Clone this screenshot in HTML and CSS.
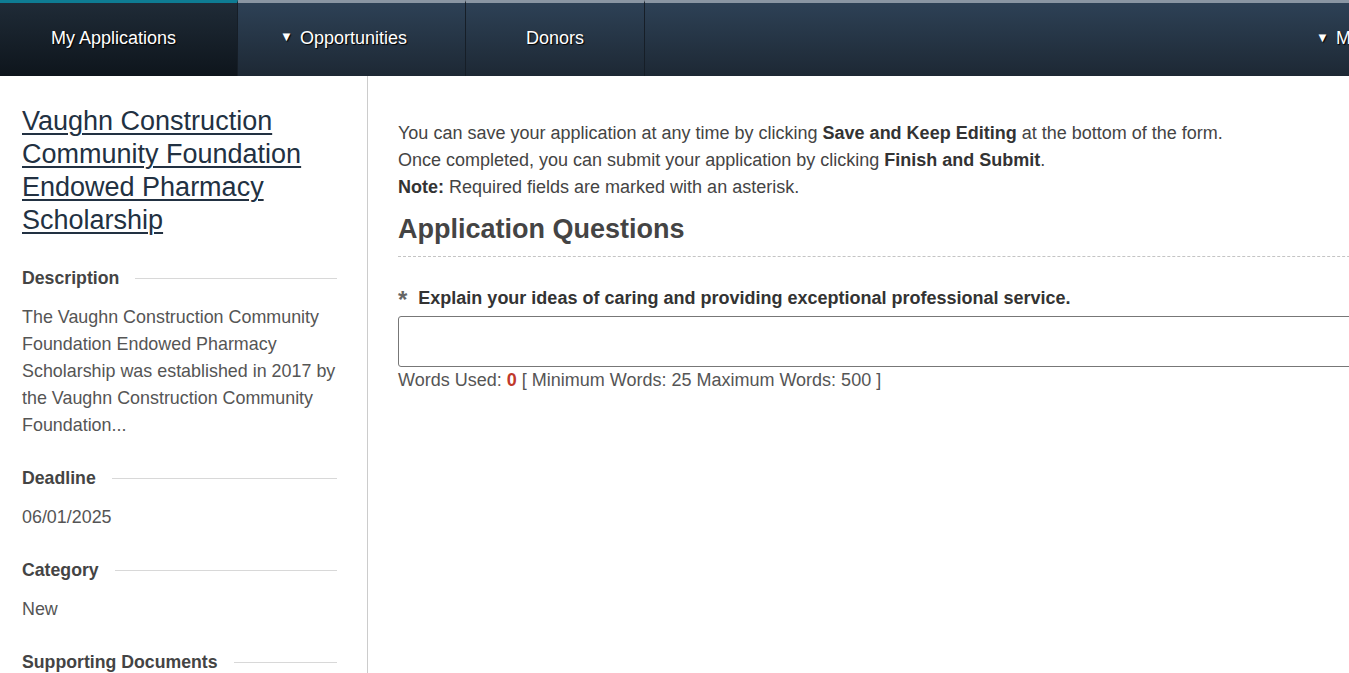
FILE: index.html
```html
<!DOCTYPE html>
<html>
<head>
<meta charset="utf-8">
<link rel="stylesheet" href="styles.css">
</head>
<body>
<div class="page">
  <nav class="topnav">
    <a class="tab active">My Applications</a>
    <a class="tab tab-opp"><span class="caret">&#9660;</span>Opportunities</a>
    <a class="tab tab-donors">Donors</a>
    <div class="tab-fill"><a class="tab-menu"><span class="caret">&#9660;</span>My Account</a></div>
  </nav>
  <div class="layout">
    <aside class="sidebar">
      <a class="title">Vaughn Construction Community Foundation Endowed Pharmacy Scholarship</a>
      <div class="section">
        <h3 class="sec-head"><span>Description</span></h3>
        <p class="sec-body">The Vaughn Construction Community Foundation Endowed Pharmacy Scholarship was established in 2017 by the Vaughn Construction Community Foundation...</p>
      </div>
      <div class="section">
        <h3 class="sec-head"><span>Deadline</span></h3>
        <p class="sec-body">06/01/2025</p>
      </div>
      <div class="section">
        <h3 class="sec-head"><span>Category</span></h3>
        <p class="sec-body">New</p>
      </div>
      <div class="section">
        <h3 class="sec-head"><span>Supporting Documents</span></h3>
      </div>
    </aside>
    <main class="main">
      <div class="intro">
        <p>You can save your application at any time by clicking <b>Save and Keep Editing</b> at the bottom of the form.</p>
        <p>Once completed, you can submit your application by clicking <b>Finish and Submit</b>.</p>
        <p><b>Note:</b> Required fields are marked with an asterisk.</p>
      </div>
      <h2 class="questions-head">Application Questions</h2>
      <div class="question">
        <label class="q-label"><span class="req">*</span>Explain your ideas of caring and providing exceptional professional service.</label>
        <textarea class="q-input"></textarea>
        <div class="words">Words Used: <span class="count">0</span> [ Minimum Words: 25 Maximum Words: 500 ]</div>
      </div>
    </main>
  </div>
</div>
</body>
</html>
```
FILE: styles.css
```css
html, body {
  margin: 0;
  padding: 0;
  overflow: hidden;
  background: #fff;
}
body {
  font-family: "Liberation Sans", Arial, sans-serif;
  color: #444;
}
.page {
  width: 1500px;
}
.topnav {
  display: flex;
  height: 76px;
  background: linear-gradient(#2e4257, #1d2834);
}
.tab {
  display: flex;
  align-items: center;
  justify-content: center;
  box-sizing: border-box;
  height: 76px;
  padding-bottom: 2px;
  color: #fff;
  font-size: 18px;
  text-shadow: 1px 1px 1px #000;
  border-top: 3px solid #8a96a3;
  border-right: 1px solid #161e27;
}
.tab.active {
  width: 238px;
  padding-right: 10px;
  background: linear-gradient(#1f2b37, #0e151c);
  border-top-color: #0e7c93;
}
.tab-opp { width: 228px; padding-right: 16px; }
.tab-donors { width: 179px; }
.tab-fill {
  flex: 1;
  display: flex;
  justify-content: flex-end;
  align-items: center;
  border-top: 3px solid #8a96a3;
  box-sizing: border-box;
  height: 76px;
  padding-bottom: 2px;
}
.tab-menu {
  color: #fff;
  font-size: 18px;
  text-shadow: 1px 1px 1px #000;
  width: 184px;
}
.caret {
  font-size: 13px;
  margin-right: 7px;
  position: relative;
  top: -2px;
}
.layout {
  display: flex;
  height: 597px;
}
.sidebar {
  width: 368px;
  box-sizing: border-box;
  border-right: 1px solid #ccc;
  padding: 29px 30px 0 22px;
  flex-shrink: 0;
}
.title {
  display: block;
  font-size: 27px;
  line-height: 33px;
  color: #223142;
  text-decoration: underline;
  text-decoration-thickness: 2px;
  text-underline-offset: 3px;
  margin-bottom: 28px;
}
.section {
  margin-bottom: 26px;
}
.sec-head {
  display: flex;
  align-items: center;
  margin: 0 0 12px 0;
  font-size: 17.7px;
  line-height: 27px;
  font-weight: bold;
  color: #444;
}
.sec-head::after {
  content: "";
  flex: 1;
  height: 1px;
  background: #d8d8d8;
  margin-left: 16px;
}
.sec-body {
  margin: 0 -8px 0 0;
  font-size: 17.9px;
  line-height: 27px;
  color: #555;
}
.main {
  flex: 1;
  padding: 44px 0 0 30px;
}
.intro p {
  margin: 0;
  font-size: 18px;
  line-height: 27px;
  color: #444;
}
.intro b { color: #333; }
.questions-head {
  margin: 8px 0 0 0;
  font-size: 27px;
  line-height: 40px;
  color: #444;
  padding-bottom: 7px;
  border-bottom: 1px dashed #c4c4c4;
}
.question {
  padding-top: 27px;
}
.q-label {
  display: block;
  font-size: 18px;
  font-weight: bold;
  color: #333;
  line-height: 24px;
  margin-bottom: 6px;
}
.req {
  color: #666;
  font-size: 24px;
  margin-right: 11px;
  position: relative;
  top: 4px;
}
.q-input {
  display: block;
  width: 100%;
  height: 51px;
  box-sizing: border-box;
  border: 1px solid #777;
  border-radius: 3px;
  resize: none;
  margin: 0;
}
.words {
  font-size: 18px;
  line-height: 26px;
  color: #555;
}
.count {
  color: #c0392b;
  font-weight: bold;
}
```
